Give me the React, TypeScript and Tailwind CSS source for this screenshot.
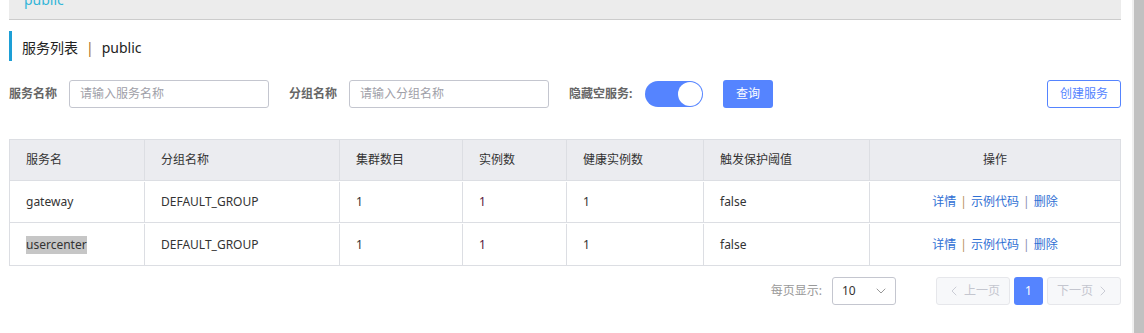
import { ChevronDown, ChevronLeft, ChevronRight } from 'lucide-react'

const COLS = [
  { label: '服务名', w: 'w-[135px]' },
  { label: '分组名称', w: 'w-[195px]' },
  { label: '集群数目', w: 'w-[123px]' },
  { label: '实例数', w: 'w-[104px]' },
  { label: '健康实例数', w: 'w-[137px]' },
  { label: '触发保护阈值', w: 'w-[166px]' },
  { label: '操作', w: 'flex-1' },
]

const ROWS = [
  { name: 'gateway', group: 'DEFAULT_GROUP', clusters: 1, instances: 1, healthy: 1, threshold: 'false', selected: false },
  { name: 'usercenter', group: 'DEFAULT_GROUP', clusters: 1, instances: 1, healthy: 1, threshold: 'false', selected: true },
]

function Ops() {
  return (
    <div className="flex items-center justify-center gap-[4px] text-[#2f6fd4]">
      <span>详情</span>
      <span className="text-[#b9905a]">|</span>
      <span>示例代码</span>
      <span className="text-[#8a8fb0]">|</span>
      <span>删除</span>
    </div>
  )
}

export default function App() {
  return (
    <div
      className="flex w-[1144px] h-[333px] bg-white overflow-hidden text-[12px] text-[#333]"
      style={{ fontFamily: '"Noto Sans", "Noto Sans CJK SC", sans-serif' }}
    >
      <div className="w-[1132px] pl-[9px] pr-[11px]">
        {/* ── Top strip ── */}
        <div className="h-[20px] bg-[#ececec] border-b border-[#cccccc] flex items-end pl-[15px] overflow-hidden">
          <span className="text-[14px] text-[#33b5d8] leading-[20px] translate-y-[-9px]">public</span>
        </div>

        {/* ── Title ── */}
        <div className="mt-[11px] h-[30px] flex items-center border-l-[3px] border-[#1d9fd6] pl-[10px] pt-[3px] text-[14px] text-[#222]">
          <span>服务列表</span>
          <span className="mx-[8px] text-[#a26a22]">|</span>
          <span>public</span>
        </div>

        {/* ── Filters ── */}
        <div className="mt-[19px] flex items-center h-[28px]">
          <span className="font-bold text-[#666] w-[60px]">服务名称</span>
          <div className="w-[200px] h-[28px] border border-[#c4c6cf] rounded-[3px] flex items-center px-[10px] text-[#a0a0a8]">
            请输入服务名称
          </div>
          <span className="font-bold text-[#666] ml-[20px] w-[60px]">分组名称</span>
          <div className="w-[200px] h-[28px] border border-[#c4c6cf] rounded-[3px] flex items-center px-[10px] text-[#a0a0a8]">
            请输入分组名称
          </div>
          <span className="font-bold text-[#666] ml-[20px] w-[76px]">隐藏空服务:</span>
          <div className="w-[58px] h-[26px] rounded-full bg-[#5584ff] flex items-center justify-end pr-[1px]">
            <div className="w-[24px] h-[24px] rounded-full bg-white" />
          </div>
          <div className="ml-[20px] w-[50px] h-[28px] rounded-[3px] bg-[#5584ff] text-white flex items-center justify-center">
            查询
          </div>
          <div className="ml-auto w-[74px] h-[28px] rounded-[3px] border border-[#5584ff] text-[#5584ff] flex items-center justify-center">
            创建服务
          </div>
        </div>

        {/* ── Table ── */}
        <div className="mt-[31px] border border-[#dcdee3]">
          <div className="flex h-[41px] bg-[#ebecf0] border-b border-[#dcdee3]">
            {COLS.map((c, i) => (
              <div
                key={c.label}
                className={`${c.w} flex items-center ${i === COLS.length - 1 ? 'justify-center' : 'pl-[16px] border-r border-[#dcdee3]'}`}
              >
                {c.label}
              </div>
            ))}
          </div>
          {ROWS.map((r, ri) => (
            <div key={r.name} className={`flex h-[42px] pt-[1px] ${ri < ROWS.length - 1 ? 'border-b border-[#dcdee3]' : 'h-[41px]'}`}>
              <div className="w-[135px] pl-[16px] flex items-center border-r border-[#dcdee3]">
                <span className={r.selected ? 'bg-[#c6c6c6]' : ''}>{r.name}</span>
              </div>
              <div className="w-[195px] pl-[16px] flex items-center border-r border-[#dcdee3]">{r.group}</div>
              <div className="w-[123px] pl-[16px] flex items-center border-r border-[#dcdee3]">{r.clusters}</div>
              <div className="w-[104px] pl-[16px] flex items-center border-r border-[#dcdee3] text-[#5a2040]">{r.instances}</div>
              <div className="w-[137px] pl-[16px] flex items-center border-r border-[#dcdee3]">{r.healthy}</div>
              <div className="w-[166px] pl-[16px] flex items-center border-r border-[#dcdee3]">{r.threshold}</div>
              <div className="flex-1 flex items-center justify-center">
                <Ops />
              </div>
            </div>
          ))}
        </div>

        {/* ── Pagination ── */}
        <div className="mt-[11px] flex items-center justify-end h-[28px]">
          <span className="text-[#999] mr-[10px]">每页显示:</span>
          <div className="w-[64px] h-[28px] border border-[#c4c6cf] rounded-[3px] flex items-center justify-between pl-[9px] pr-[6px] text-[#333]">
            <span>10</span>
            <ChevronDown size={16} strokeWidth={1.3} className="text-[#888]" />
          </div>
          <div className="ml-[40px] w-[74px] h-[28px] border border-[#e6e7eb] bg-[#f7f8fa] rounded-[3px] flex items-center justify-center gap-[2px] text-[#c4c6cf]">
            <ChevronLeft size={16} strokeWidth={1.3} />
            <span>上一页</span>
          </div>
          <div className="ml-[4px] w-[29px] h-[28px] rounded-[3px] bg-[#5584ff] text-white flex items-center justify-center">
            1
          </div>
          <div className="ml-[4px] w-[74px] h-[28px] border border-[#e6e7eb] bg-[#f7f8fa] rounded-[3px] flex items-center justify-center gap-[2px] text-[#c4c6cf]">
            <span>下一页</span>
            <ChevronRight size={16} strokeWidth={1.3} />
          </div>
        </div>
      </div>

      {/* ── Scrollbar ── */}
      <div className="w-[12px] flex">
        <div className="w-[2px] bg-[#f0f0f0]" />
        <div className="flex-1 bg-[#c1c1c1]" />
      </div>
    </div>
  )
}
